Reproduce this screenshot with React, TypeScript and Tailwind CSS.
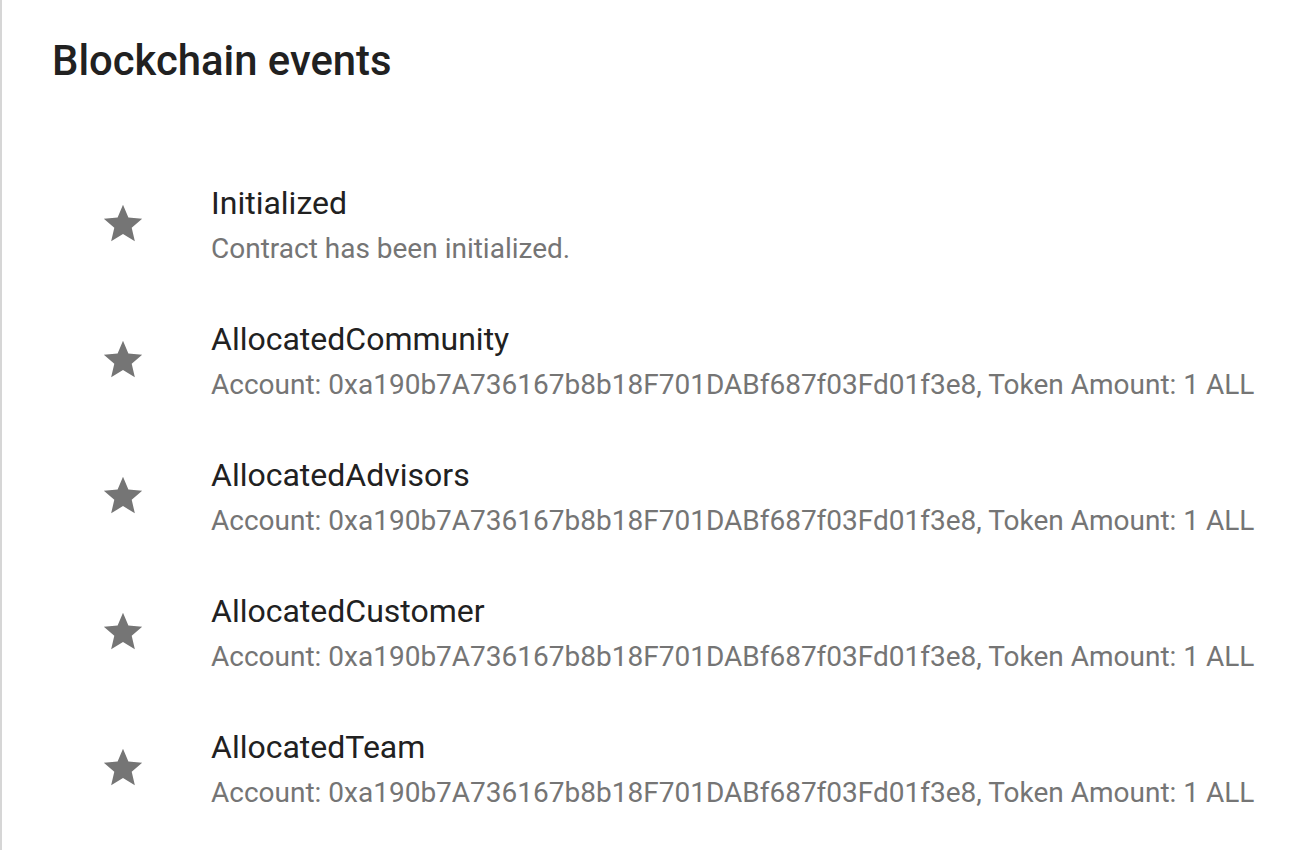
const account = '0xa190b7A736167b8b18F701DABf687f03Fd01f3e8';

const events = [
  { name: 'Initialized', detail: 'Contract has been initialized.' },
  { name: 'AllocatedCommunity', detail: `Account: ${account}, Token Amount: 1 ALL` },
  { name: 'AllocatedAdvisors', detail: `Account: ${account}, Token Amount: 1 ALL` },
  { name: 'AllocatedCustomer', detail: `Account: ${account}, Token Amount: 1 ALL` },
  { name: 'AllocatedTeam', detail: `Account: ${account}, Token Amount: 1 ALL` },
];

function StarIcon() {
  return (
    <svg viewBox="0 0 24 24" className="w-[46px] h-[46px] fill-[#757575]">
      <path d="M12 17.27L18.18 21l-1.64-7.03L22 9.24l-7.19-.61L12 2 9.19 8.63 2 9.24l5.46 4.73L5.82 21z" />
    </svg>
  );
}

export default function App() {
  return (
    <div className="min-h-[850px] w-[1310px] bg-white border-l-2 border-[#d6d6d6] font-['Roboto',sans-serif] overflow-hidden">
      <h1 className="pl-[50px] pt-[36px] text-[41.8px] leading-[50px] font-medium text-[#212121]">
        Blockchain events
      </h1>
      <ul className="pt-[70px]">
        {events.map((e) => (
          <li key={e.name} className="flex items-center h-[136px]">
            <div className="w-[209px] pl-[98px] flex items-center">
              <StarIcon />
            </div>
            <div className="flex flex-col whitespace-nowrap">
              <span className="text-[32px] leading-[48px] text-[#212121]">{e.name}</span>
              <span className="pt-[2px] text-[28px] leading-[40px] text-[#757575]">{e.detail}</span>
            </div>
          </li>
        ))}
      </ul>
    </div>
  );
}
